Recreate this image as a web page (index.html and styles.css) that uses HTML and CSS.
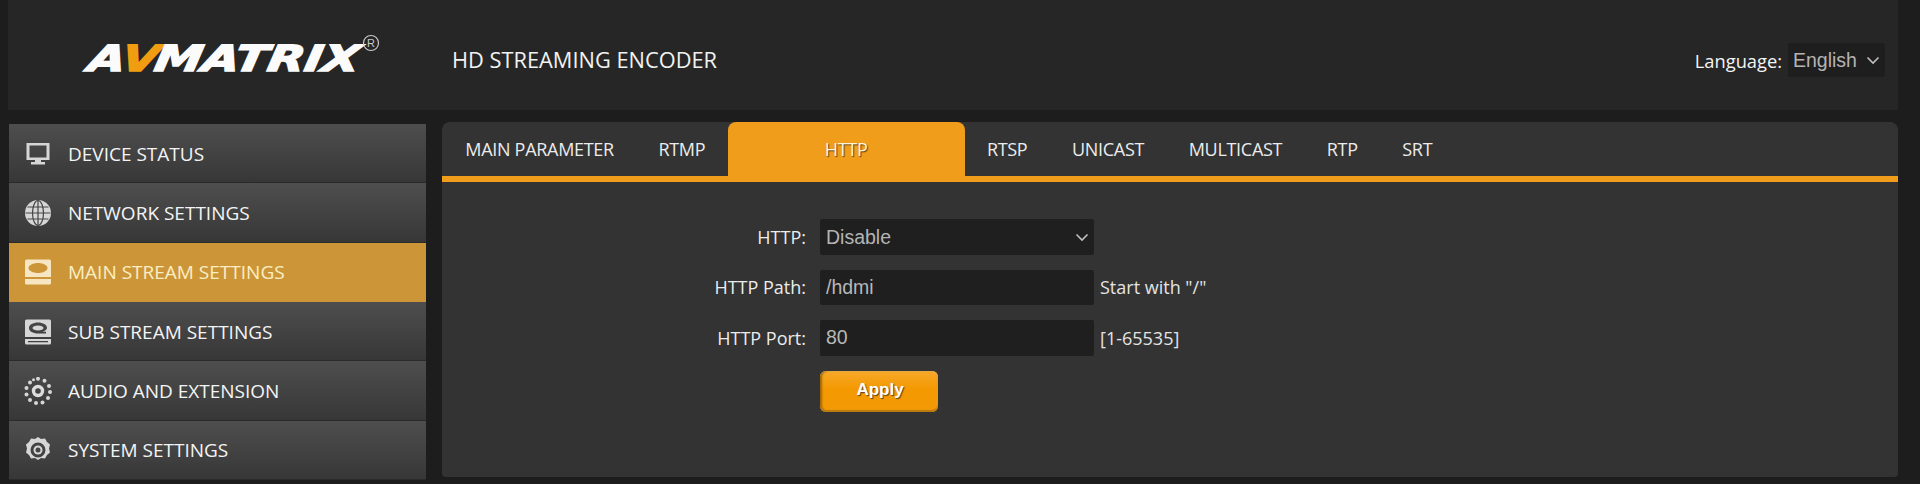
FILE: index.html
```html
<!DOCTYPE html>
<html lang="en">
<head>
<meta charset="utf-8">
<title>HD Streaming Encoder</title>
<link rel="stylesheet" href="styles.css">
</head>
<body>
<div class="page">
  <header class="header">
    <div class="logo">
      <svg width="328" height="60" viewBox="0 0 328 60" aria-label="AVMATRIX">
        <text class="logo-text" x="0" y="52" textLength="271" lengthAdjust="spacingAndGlyphs" transform="translate(22 0) skewX(-10)">A<tspan class="logo-v" dx="-3">V</tspan><tspan dx="-3">MATRIX</tspan></text>
        <circle class="logo-reg-ring" cx="297" cy="24" r="7.5"/>
        <text class="logo-reg" x="297" y="28" text-anchor="middle">R</text>
      </svg>
    </div>
    <h1 class="title">HD STREAMING ENCODER</h1>
    <div class="lang">
      <span class="lang-label">Language:</span>
      <div class="select-wrap lang-select">
        <select class="select"><option>English</option></select>
        <svg class="chev" width="14" height="9" viewBox="0 0 14 9"><path d="M1.5 1.5 7 7l5.5-5.5"/></svg>
      </div>
    </div>
  </header>
  <div class="content">
    <nav class="menu">
      <a class="item">
        <svg class="ico" width="28" height="28" viewBox="0 0 28 28"><path fill-rule="evenodd" d="M2.500 3h23v17h-23zM5.500 5.500v12h17v-12z"/><path d="M11 20h6v2h4v2.500H7V22h4z"/></svg>
        DEVICE STATUS
      </a>
      <a class="item">
        <svg class="ico" width="28" height="28" viewBox="0 0 28 28"><circle cx="14" cy="14" r="13"/><g class="grid-lines"><ellipse cx="14" cy="14" rx="5.500" ry="12.500"/><path d="M14 1.500v25M1.500 14h25M3.500 8h21M3.500 20h21"/></g></svg>
        NETWORK SETTINGS
      </a>
      <a class="item active">
        <svg class="ico" width="28" height="28" viewBox="0 0 28 28"><path fill-rule="evenodd" d="M1 3a1.500 1.500 0 0 1 1.500-1.500h23A1.500 1.500 0 0 1 27 3v16H1zM14 5C9 5 4.500 7.200 4.500 10s4.500 5 9.500 5 9.500-2.200 9.500-5-4.500-5-9.500-5z"/><ellipse cx="14" cy="10" rx="5.500" ry="2.500"/><path d="M1 21h26v4a1.500 1.500 0 0 1-1.500 1.500h-23A1.500 1.500 0 0 1 1 25z"/></svg>
        MAIN STREAM SETTINGS
      </a>
      <a class="item">
        <svg class="ico" width="28" height="28" viewBox="0 0 28 28"><path fill-rule="evenodd" d="M1 3a1.500 1.500 0 0 1 1.500-1.500h23A1.500 1.500 0 0 1 27 3v16H1zM14 4.500c-5 0-9 2.300-9 5.500s4 5.500 9 5.500h8v-1.800h-3.500c2.800-1 4.500-2.200 4.500-3.700 0-3.200-4-5.500-9-5.500z"/><ellipse cx="14" cy="10" rx="5.500" ry="2.500"/><path fill-rule="evenodd" d="M1 21h26v4a1.500 1.500 0 0 1-1.500 1.500h-23A1.500 1.500 0 0 1 1 25zM4 23v1.200h20V23z"/></svg>
        SUB STREAM SETTINGS
      </a>
      <a class="item">
        <svg class="ico" width="28" height="28" viewBox="0 0 28 28"><circle class="ring" cx="14" cy="14" r="4.500"/><g class="dots"><circle cx="14" cy="1.800" r="2"/><circle cx="20.500" cy="3.800" r="2"/><circle cx="25" cy="9" r="2"/><circle cx="26" cy="15" r="2"/><circle cx="24" cy="21" r="2"/><circle cx="18.500" cy="25.500" r="2"/><circle cx="12" cy="26" r="2"/><circle cx="6" cy="23" r="2"/><circle cx="2.500" cy="17.500" r="2"/><circle cx="2.500" cy="11" r="2"/><circle cx="6" cy="5.500" r="2"/><circle cx="9.500" cy="2.800" r="1.500"/></g></svg>
        AUDIO AND EXTENSION
      </a>
      <a class="item">
        <svg class="ico" width="28" height="28" viewBox="0 0 28 28"><path fill-rule="evenodd" d="M14 1l3 2 4-.5 2 3.500 3 2.500-1 4 1 4-3 2.500-2 3.500-4-.5-3 2-3-2-4 .5-2-3.500-3-2.500 1-4-1-4 3-2.500 2-3.500 4 .5zM14 6.500a7.500 7.500 0 1 0 0 15 7.500 7.500 0 0 0 0-15z"/><circle cx="14" cy="14" r="4.500"/><circle class="gear-hole" cx="14" cy="14" r="2.500"/></svg>
        SYSTEM SETTINGS
      </a>
    </nav>
    <main class="panel">
      <div class="tabs">
        <a class="tab">MAIN PARAMETER</a>
        <a class="tab">RTMP</a>
        <a class="tab tab-active">HTTP</a>
        <a class="tab">RTSP</a>
        <a class="tab">UNICAST</a>
        <a class="tab">MULTICAST</a>
        <a class="tab">RTP</a>
        <a class="tab">SRT</a>
      </div>
      <form class="form">
        <label class="label">HTTP:</label>
        <div class="select-wrap field">
          <select class="select"><option>Disable</option></select>
          <svg class="chev" width="14" height="9" viewBox="0 0 14 9"><path d="M1.500 1.500 7 7l5.500-5.500"/></svg>
        </div>
        <span class="hint"></span>
        <label class="label">HTTP Path:</label>
        <input class="input field" value="/hdmi">
        <span class="hint">Start with "/"</span>
        <label class="label">HTTP Port:</label>
        <input class="input field" value="80">
        <span class="hint">[1-65535]</span>
        <span class="label"></span>
        <div class="actions"><button class="apply" type="button">Apply</button></div>
      </form>
    </main>
  </div>
</div>
</body>
</html>
```
FILE: styles.css
```css
* { box-sizing: border-box; }
html, body { margin: 0; padding: 0; height: 484px; overflow: hidden; background: #1d1d1d; }
body { font-family: "Open Sans", "Noto Sans", sans-serif; color: #f0f0f0; }
.page { padding-right: 22px; }

.header { display: flex; align-items: center; height: 110px; margin-left: 8px; background: #262626; }
.logo { width: 444px; height: 110px; padding: 19px 0 0 66px; flex: none; }
.logo svg { display: block; }
.logo-text { font-family: "DejaVu Sans", sans-serif; font-weight: 700; font-style: italic; font-size: 36px; fill: #fbfbfb; stroke: #fbfbfb; stroke-width: 1.5px; }
.logo-v { fill: #f09d12; stroke: #f09d12; }
.logo-reg-ring { fill: none; stroke: #c8c8c8; stroke-width: 1.200; }
.logo-reg { font-family: "Liberation Sans", sans-serif; font-size: 11px; fill: #c8c8c8; }
.title { margin: 0; padding-top: 8px; font-size: 21.800px; font-weight: 400; color: #f2f2f2; white-space: nowrap; }
.lang { margin-left: auto; display: flex; align-items: center; gap: 6px; padding: 10px 13px 0 0; }
.lang-label { font-size: 18.300px; font-weight: 500; color: #f5f5f5; }

.select-wrap { position: relative; display: block; }
.lang-select { width: 97px; height: 34px; }
.select { appearance: none; -webkit-appearance: none; width: 100%; height: 100%; padding: 0 6px; border: 0; border-radius: 2px; background: #1f1f1f; color: #b4b4b4; font-family: "Liberation Sans", Arial, sans-serif; font-size: 19.500px; outline: 0; }
.lang-select .select { background: #1e1e1e; padding: 0 5px; }
.chev { position: absolute; right: 5px; top: 50%; margin-top: -4px; fill: none; stroke: #c0c0c0; stroke-width: 1.600; }

.content { display: flex; gap: 16px; margin-top: 12px; align-items: flex-start; }
.menu { width: 417px; margin: 2px 0 0 9px; flex: none; display: flex; flex-direction: column; }
.item { display: flex; align-items: center; gap: 16px; height: 59.330px; padding-left: 15px; padding-top: 1px; font-size: 19px; color: #f4f4f4; background: linear-gradient(#4e4e4e, #373737); border-bottom: 1px solid #2a2a2a; white-space: nowrap; }
.item.active { background: #cc9638; color: #fbeec4; border-bottom-color: #cc9638; }
.ico { fill: #d6d6d6; flex: none; }
.active .ico { fill: #f7e6c2; }
.active .ico ellipse { fill: #cc9638; stroke: none; }
.grid-lines { fill: none; stroke: #444; stroke-width: 1.200; }
.ring { fill: none; stroke: #dcdcdc; stroke-width: 3.400; }
.dots { fill: #d6d6d6; }
.gear-hole { fill: #444; }

.panel { flex: 1; height: 355px; background: #333; border-radius: 8px 8px 4px 4px; }
.tabs { display: flex; height: 60px; border-bottom: 6px solid #f09d1c; }
.tab { display: flex; align-items: center; padding: 0 22.300px; font-size: 18px; letter-spacing: -.3px; color: #ececec; white-space: nowrap; }
.tabs .tab:first-child { margin-left: 1px; }
.tab-active { width: 237px; justify-content: center; background: #f09d1c; border-radius: 8px 8px 0 0; color: #fdf3d6; text-shadow: 1px 1px 1px #5a4018; }

.form { display: grid; grid-template-columns: 364px 274px auto; column-gap: 14px; row-gap: 15px; padding-top: 37px; align-items: center; grid-auto-rows: 35.500px; }
.label { text-align: right; font-size: 18px; color: #ececec; }
.hint { margin-left: -8px; font-size: 18px; color: #e4e4e4; }
.field { width: 274px; height: 100%; }
.input { padding: 0 6px; border: 0; border-radius: 2px; background: #1f1f1f; color: #b8b8b8; font-family: "Liberation Sans", Arial, sans-serif; font-size: 19.500px; outline: 0; }
.actions { grid-column: 2 / 4; height: 42px; align-self: start; }
.apply { width: 118px; height: 41px; border: 0; border-radius: 6px; background: linear-gradient(#f7a92a, #f39800 45%, #f39a06); box-shadow: inset 0 -2px 1px #b97a10, inset 2px 0 2px #a06608, inset -1px 0 1px #e0a040, inset 0 1px 1px #ffc860; color: #fff; font-family: "Liberation Sans", Arial, sans-serif; font-size: 17px; font-weight: 700; text-shadow: 1px 1px 1px #5a4018; padding: 0 0 2px 2px; }
```
